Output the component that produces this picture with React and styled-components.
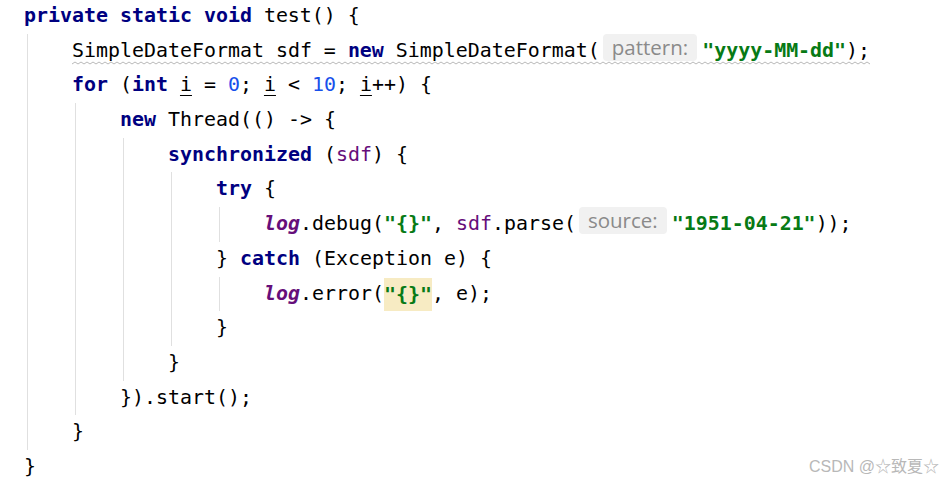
import React from 'react';
import styled, { createGlobalStyle, css } from 'styled-components';

const GlobalStyle = createGlobalStyle`
  html, body {
    margin: 0;
    padding: 0;
    background: #ffffff;
  }
`;

const wave =
  "url(\"data:image/svg+xml;utf8,<svg xmlns='http://www.w3.org/2000/svg' width='6' height='4'><path d='M0 3 L3 1 L6 3' fill='none' stroke='%23b8b8b8' stroke-width='1'/></svg>\")";

const Page = styled.div`
  position: relative;
  width: 944px;
  height: 483px;
  overflow: hidden;
  background: #ffffff;
`;

const Code = styled.div`
  margin-top: -1px;
  padding-left: 24px;
  font-family: 'DejaVu Sans Mono', 'Liberation Mono', monospace;
  font-size: 19.93px;
  color: #000000;
`;

const Line = styled.div`
  height: 34.7px;
  line-height: 34.7px;
  white-space: pre;
`;

const Block = styled.div`
  margin-left: 3px;
  padding-left: 44px;
  border-left: 1px solid #e0e0e0;
`;

const Kw = styled.span`
  font-weight: bold;
  color: #000080;
`;

const Str = styled.span`
  font-weight: bold;
  color: #077a15;
  ${(p) =>
    p.$hl &&
    css`
      display: inline-block;
      height: 33px;
      line-height: 33px;
      vertical-align: top;
      margin-top: 1px;
      background: #f7ebc3;
    `}
`;

const Num = styled.span`
  color: #1750eb;
`;

const Field = styled.span`
  color: #660e7a;
  ${(p) =>
    p.$static &&
    css`
      font-style: italic;
      font-weight: bold;
    `}
`;

const Reassigned = styled.span`
  text-decoration: underline;
  text-underline-offset: 4px;
  text-decoration-thickness: 1px;
`;

const Hint = styled.span`
  display: inline-block;
  height: 27px;
  line-height: 27px;
  padding: 0 9px;
  margin: 0 5px 0 3px;
  border-radius: 4px;
  background: #f1f1f1;
  color: #8a8a8a;
  font-family: 'Open Sans', 'Noto Sans', sans-serif;
  font-size: 20.5px;
  vertical-align: 2px;
`;

const Warn = styled.span`
  position: relative;
  display: inline-block;

  &::after {
    content: '';
    position: absolute;
    left: 0;
    right: 0;
    top: 27px;
    height: 4px;
    background: ${wave} repeat-x;
  }
`;

const Watermark = styled.div`
  position: absolute;
  right: 5px;
  bottom: 6px;
  font-family: 'Liberation Sans', 'Noto Sans CJK SC', sans-serif;
  font-size: 16px;
  color: #b8b8b8;
`;

export default function App() {
  return (
    <Page>
      <GlobalStyle />
      <Code>
        <Line>
          <Kw>private static void</Kw> test() {'{'}
        </Line>
        <Block>
          <Line>
            <Warn>
              SimpleDateFormat sdf = <Kw>new</Kw> SimpleDateFormat(<Hint>pattern:</Hint>
              <Str>"yyyy-MM-dd"</Str>);
            </Warn>
          </Line>
          <Line>
            <Kw>for</Kw> (<Kw>int</Kw> <Reassigned>i</Reassigned> = <Num>0</Num>;{' '}
            <Reassigned>i</Reassigned> &lt; <Num>10</Num>; <Reassigned>i</Reassigned>++) {'{'}
          </Line>
          <Block>
            <Line>
              <Kw>new</Kw> Thread(() -&gt; {'{'}
            </Line>
            <Block>
              <Line>
                <Kw>synchronized</Kw> (<Field>sdf</Field>) {'{'}
              </Line>
              <Block>
                <Line>
                  <Kw>try</Kw> {'{'}
                </Line>
                <Block>
                  <Line>
                    <Field $static>log</Field>.debug(<Str>"{'{}'}"</Str>, <Field>sdf</Field>.parse(
                    <Hint>source:</Hint>
                    <Str>"1951-04-21"</Str>));
                  </Line>
                </Block>
                <Line>
                  {'}'} <Kw>catch</Kw> (Exception e) {'{'}
                </Line>
                <Block>
                  <Line>
                    <Field $static>log</Field>.error(<Str $hl>"{'{}'}"</Str>, e);
                  </Line>
                </Block>
                <Line>{'}'}</Line>
              </Block>
              <Line>{'}'}</Line>
            </Block>
            <Line>{'}'}).start();</Line>
          </Block>
          <Line>{'}'}</Line>
        </Block>
        <Line>{'}'}</Line>
      </Code>
      <Watermark>CSDN @☆致夏☆</Watermark>
    </Page>
  );
}
